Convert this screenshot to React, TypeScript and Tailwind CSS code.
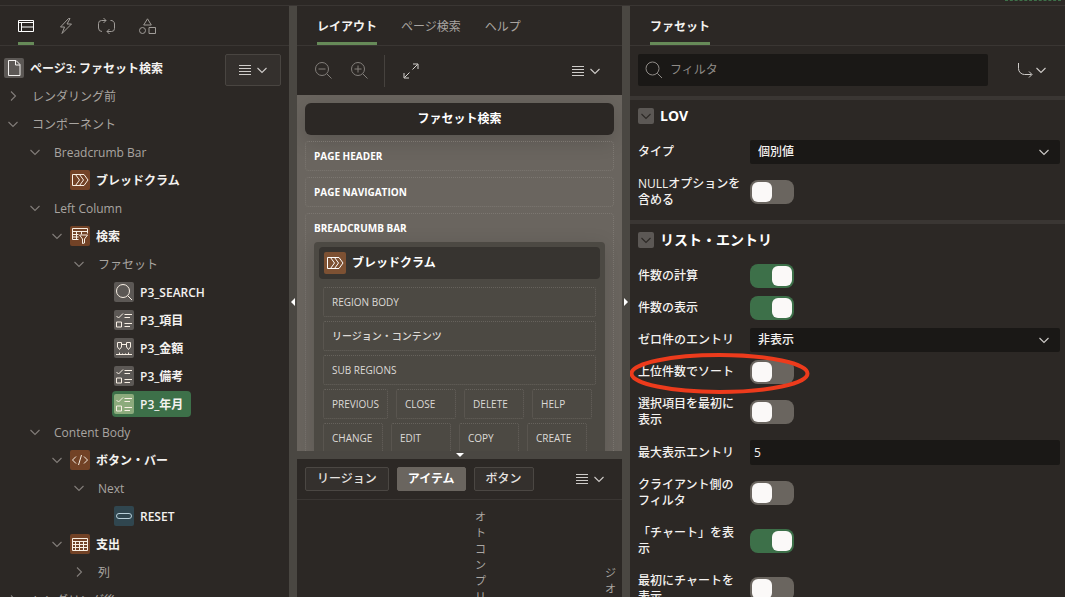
import { useState } from 'react';
import type { ReactNode } from 'react';

type TileTone = 'brown' | 'gray' | 'teal';

type TreeNode = {
  label: string;
  icon?: ReactNode;
  tone?: TileTone;
  open?: boolean;
  selected?: boolean;
  children?: TreeNode[];
};

const tileTones: Record<TileTone, string> = {
  brown: 'bg-[#724226]',
  gray: 'bg-[#5c5855]',
  teal: 'bg-[#30464f]',
};

function Glyph({ children, className = 'size-5' }: { children: ReactNode; className?: string }) {
  return (
    <svg className={className} viewBox="0 0 20 20" fill="none" stroke="currentColor" aria-hidden="true">
      {children}
    </svg>
  );
}

function Chevron({ className = '', right = false }: { className?: string; right?: boolean }) {
  return (
    <svg className={`size-3 ${className}`} viewBox="0 0 12 12" fill="none" stroke="currentColor" strokeWidth="1.1" aria-hidden="true">
      <path d={right ? 'M4 1.5 8.5 6 4 10.5' : 'M1.5 4 6 8.5 10.5 4'} />
    </svg>
  );
}

const breadcrumbIcon = (
  <Glyph>
    <path d="M2.5 4.5H14L18 10l-4 5.5H2.5zM5.5 4.5 9.5 10l-4 5.5M9.5 4.5l4 5.5-4 5.5" />
  </Glyph>
);

const facetedIcon = (
  <Glyph>
    <path d="M8.5 13.5h-6v-11h15v5M2.5 5.5h15M2.5 8.5h6M2.5 11h6M6.5 5.5v8M11.5 5.5v3" />
    <path d="M9.5 9h8l-3 4v4l-2 .5V13z" />
  </Glyph>
);

const searchIcon = (
  <Glyph>
    <circle cx="9" cy="9" r="6.5" />
    <path d="m13.8 13.8 4.2 4.2" />
  </Glyph>
);

const checksIcon = (
  <Glyph>
    <path d="m2.5 6 2 2L9 3.5M10.5 4.5H18M10.5 7.5h5.5M10.5 13.5H18M10.5 16.5h5.5M2.5 12h5v5h-5z" />
  </Glyph>
);

const rangeIcon = (
  <Glyph>
    <path d="M3.5 4.5h4V9l-2 2.5-2-2.5zM12.5 4.5h4V9l-2 2.5-2-2.5zM7.5 6.5h5M2 16.5h16M5.5 16.5v-2M8.5 16.5v-1M11.5 16.5v-1M14.5 16.5v-2" />
  </Glyph>
);

const codeIcon = (
  <Glyph>
    <path d="M6 6.5 2.5 10 6 13.5M14 6.5l3.5 3.5-3.5 3.5M11.5 5l-3 10" />
  </Glyph>
);

const buttonIcon = (
  <Glyph>
    <rect x="2.5" y="7.5" width="15" height="5" rx="2.5" />
  </Glyph>
);

const tableIcon = (
  <Glyph>
    <path d="M2.5 4.5h15v12h-15zM2.5 7.5h15M2.5 10.5h15M2.5 13.5h15M5.5 7.5v9M9.5 7.5v9M13.5 7.5v9" />
  </Glyph>
);

const tree: TreeNode[] = [
  { label: 'レンダリング前', open: false, children: [] },
  {
    label: 'コンポーネント',
    open: true,
    children: [
      {
        label: 'Breadcrumb Bar',
        open: true,
        children: [{ label: 'ブレッドクラム', icon: breadcrumbIcon, tone: 'brown' }],
      },
      {
        label: 'Left Column',
        open: true,
        children: [
          {
            label: '検索',
            icon: facetedIcon,
            tone: 'brown',
            open: true,
            children: [
              {
                label: 'ファセット',
                open: true,
                children: [
                  { label: 'P3_SEARCH', icon: searchIcon, tone: 'gray' },
                  { label: 'P3_項目', icon: checksIcon, tone: 'gray' },
                  { label: 'P3_金額', icon: rangeIcon, tone: 'gray' },
                  { label: 'P3_備考', icon: checksIcon, tone: 'gray' },
                  { label: 'P3_年月', icon: checksIcon, tone: 'gray', selected: true },
                ],
              },
            ],
          },
        ],
      },
      {
        label: 'Content Body',
        open: true,
        children: [
          {
            label: 'ボタン・バー',
            icon: codeIcon,
            tone: 'brown',
            open: true,
            children: [
              {
                label: 'Next',
                open: true,
                children: [{ label: 'RESET', icon: buttonIcon, tone: 'teal' }],
              },
            ],
          },
          {
            label: '支出',
            icon: tableIcon,
            tone: 'brown',
            open: true,
            children: [{ label: '列', open: false, children: [] }],
          },
        ],
      },
    ],
  },
  { label: 'レンダリング後', open: false, children: [] },
];

function TreeItem({ node }: { node: TreeNode }) {
  const [open, setOpen] = useState(!!node.open);

  return (
    <li>
      <div className="flex h-7 items-center">
        {node.children ? (
          <button
            className="flex w-6 shrink-0 justify-center pl-0.5 text-[#827e7a]"
            onClick={() => setOpen(!open)}
            aria-label={node.label}
            aria-expanded={open}
          >
            <Chevron right={!open} />
          </button>
        ) : (
          <span className="w-6 shrink-0" />
        )}
        <button
          className={`flex items-center gap-1.5 whitespace-nowrap rounded p-0.5 pr-2 leading-5 ${
            node.selected ? 'bg-[#3d7049]' : ''
          } ${node.icon ? 'font-semibold text-[#f4f2f0]' : 'pl-2 text-[#a9a5a1]'}`}
        >
          {node.icon && (
            <span
              className={`rounded-xs ${node.selected ? 'bg-[#8cab7c]' : tileTones[node.tone ?? 'gray']} ${
                node.tone === 'teal' ? 'text-[#b9d0da]' : 'text-[#f8efe4]'
              }`}
            >
              {node.icon}
            </span>
          )}
          <span className="pt-0.5">{node.label}</span>
        </button>
      </div>
      {open && node.children && node.children.length > 0 && (
        <ul className="pl-[22px]">
          {node.children.map((child) => (
            <TreeItem key={child.label} node={child} />
          ))}
        </ul>
      )}
    </li>
  );
}

function MenuButton({ boxed = false }: { boxed?: boolean }) {
  return (
    <button
      className={`flex h-8 w-14 shrink-0 items-center justify-center gap-1 rounded-xs text-[#cfccc9] ${
        boxed ? 'border border-[#494541] bg-[#34302d]' : ''
      }`}
      aria-label="メニュー"
    >
      <svg className="h-3 w-3.5" viewBox="0 0 14 12" stroke="currentColor" aria-hidden="true">
        <path d="M1 1.5h12M1 4.5h12M1 7.5h12M1 10.5h12" />
      </svg>
      <Chevron />
    </button>
  );
}

function VerticalSplitter({ right = false }: { right?: boolean }) {
  return (
    <div className="flex items-center justify-center bg-[#4a4742]">
      <svg className="h-2 w-1" viewBox="0 0 4 8" fill="#fff" aria-hidden="true">
        <path d={right ? 'M0 0l4 4-4 4z' : 'M4 0 0 4l4 4z'} />
      </svg>
    </div>
  );
}

function TabText({ label, active = false }: { label: string; active?: boolean }) {
  return (
    <button
      role="tab"
      aria-selected={active}
      className={`h-full border-b-3 pt-1.5 ${
        active ? 'border-[#668a58] font-semibold text-[#f4f2f0]' : 'border-transparent text-[#a9a5a1]'
      }`}
    >
      {label}
    </button>
  );
}

function TreePanel() {
  return (
    <aside className="flex min-w-0 flex-col overflow-hidden">
      <div role="tablist" className="flex h-10 shrink-0 gap-6 border-b border-[#3a3633] px-[18px] text-[#a09c98]">
        <button role="tab" aria-selected="true" aria-label="レンダリング" className="border-b-3 border-[#668a58] pt-1 text-white">
          <svg className="size-4" viewBox="0 0 16 16" fill="none" stroke="currentColor">
            <path d="M.5 2.500h15v11H.5zM.5 4.500h15M3.500 4.500v9M3.500 9h12" />
          </svg>
        </button>
        <button role="tab" aria-label="動的アクション" className="border-b-3 border-transparent pt-1">
          <svg className="size-4" viewBox="0 0 16 16" fill="none" stroke="currentColor" strokeLinejoin="round">
            <path d="M10.500.5 2.500 9h4l-2.500 6.500 9.500-9.500H9l3-5.500z" />
          </svg>
        </button>
        <button role="tab" aria-label="プロセス" className="border-b-3 border-transparent pt-1">
          <svg className="h-4 w-[17px]" viewBox="0 0 17 16" fill="none" stroke="currentColor">
            <path d="M4 13.500a3.500 3.500 0 0 1-3.500-3.500V5.500A3 3 0 0 1 3.500 2.500h4.500M5.500 0l2.500 2.500L5.500 5M12.500 2.500A3.500 3.500 0 0 1 16.500 6v4.500a3 3 0 0 1-3 3H9M11.500 11 9 13.500l2.500 2.500" />
          </svg>
        </button>
        <button role="tab" aria-label="共有コンポーネント" className="border-b-3 border-transparent pt-1">
          <svg className="h-4 w-[17px]" viewBox="0 0 17 16" fill="none" stroke="currentColor">
            <path d="M8.500.8 12.300 7H4.700zM10 9.500h6.500v6H10z" />
            <circle cx="3.500" cy="12.500" r="3" />
          </svg>
        </button>
      </div>
      <div className="flex items-start pt-2">
        <nav className="min-w-0 flex-1">
          <button className="flex h-7 items-center gap-1.5 whitespace-nowrap pl-1 font-semibold leading-5 text-[#f4f2f0]">
            <span className="rounded-xs bg-[#5c5855]">
              <Glyph>
                <path d="M4.500 2.500h7.500l4 4v11H4.500zM11.500 2.500V7H16" />
              </Glyph>
            </span>
            <span className="pt-0.5">ページ3: ファセット検索</span>
          </button>
          <ul>
            {tree.map((node) => (
              <TreeItem key={node.label} node={node} />
            ))}
          </ul>
        </nav>
        <div className="pr-2">
          <MenuButton boxed />
        </div>
      </div>
    </aside>
  );
}

function Slot({ label }: { label: string }) {
  return (
    <div className="h-[30px] min-w-[60px] rounded-xs border border-dotted border-[#66625c] px-2 text-[10px] font-medium leading-7 text-[#dddad7]">
      {label}
    </div>
  );
}

const buttonSlots = ['PREVIOUS', 'CLOSE', 'DELETE', 'HELP', 'CHANGE', 'EDIT', 'COPY', 'CREATE'];

function LayoutPanel() {
  return (
    <main className="flex min-w-0 flex-col overflow-hidden">
      <div role="tablist" className="flex h-10 shrink-0 gap-6 border-b border-[#3a3633] px-5">
        <TabText label="レイアウト" active />
        <TabText label="ページ検索" />
        <TabText label="ヘルプ" />
      </div>
      <div className="flex h-[49px] shrink-0 items-center pl-4 pr-2">
        <button className="flex w-5 justify-center text-[#837f7b]" aria-label="縮小">
          <Glyph>
            <circle cx="9" cy="8" r="6.500" />
            <path d="m13.800 12.800 4.700 4.700M5.500 8h7" />
          </Glyph>
        </button>
        <button className="ml-4 flex w-5 justify-center text-[#837f7b]" aria-label="拡大">
          <Glyph>
            <circle cx="9" cy="8" r="6.500" />
            <path d="m13.800 12.800 4.700 4.700M5.500 8h7M9 4.500v7" />
          </Glyph>
        </button>
        <span className="ml-[15px] h-8 w-px bg-[#46423e]" />
        <button className="ml-4 flex text-[#d5d2cf]" aria-label="展開">
          <Glyph>
            <path d="M11.500 8.500 16.500 3.500M12 3h5v5M8.500 11.500l-5 5M3 12v5h5" />
          </Glyph>
        </button>
        <div className="ml-auto">
          <MenuButton />
        </div>
      </div>

      <div className="flex h-[356px] min-h-0 flex-col gap-1.5 overflow-hidden bg-[#6a655f] p-2 pb-0">
        <h1 className="shrink-0 rounded-md bg-[#2c2825] text-center font-bold leading-8 text-white shadow-[0_6px_20px_rgba(0,0,0,0.16)]">
          ファセット検索
        </h1>
        <div className="h-[30px] shrink-0 rounded border border-dotted border-[#7c7771] px-2 text-[10px] font-bold leading-7 text-white">PAGE HEADER</div>
        <div className="h-[30px] shrink-0 rounded border border-dotted border-[#7c7771] px-2 text-[10px] font-bold leading-7 text-white">PAGE NAVIGATION</div>
        <div className="shrink-0 rounded border border-dotted border-[#7c7771] px-2 text-[10px] font-bold leading-7 text-white">
          BREADCRUMB BAR
          <div className="rounded-t bg-[#4c4943] p-[5px] font-normal shadow-[0_4px_20px_rgba(0,0,0,0.14)]">
            <h2 className="flex h-8 items-center gap-1.5 rounded bg-[#373430] px-[5px] text-xs font-bold text-white">
              <span className="rounded-xs bg-[#7d5133] p-px">{breadcrumbIcon}</span>
              ブレッドクラム
            </h2>
            <div className="flex flex-col gap-1 px-1 pt-2 font-normal">
              <Slot label="REGION BODY" />
              <Slot label="リージョン・コンテンツ" />
              <Slot label="SUB REGIONS" />
              <div className="flex flex-wrap gap-x-2 gap-y-1">
                {buttonSlots.map((name) => (
                  <Slot key={name} label={name} />
                ))}
              </div>
            </div>
          </div>
        </div>
      </div>

      <div className="flex h-2 shrink-0 items-center justify-center bg-[#4a4742]">
        <svg className="h-1 w-2" viewBox="0 0 8 4" fill="#fff" aria-hidden="true">
          <path d="M0 0h8L4 4z" />
        </svg>
      </div>

      <div className="flex h-[41px] shrink-0 items-center gap-2 border-b border-[#3a3633] pl-2 pr-1">
        <button className="h-6 rounded-xs border border-[#4b4743] bg-[#34302d] px-[11px] font-medium text-[#e6e3e0]">リージョン</button>
        <button className="h-6 rounded-xs border border-[#6a655f] bg-[#6a655f] px-[10px] font-bold text-white">アイテム</button>
        <button className="h-6 rounded-xs border border-[#4b4743] bg-[#34302d] px-[11px] font-medium text-[#e6e3e0]">ボタン</button>
        <div className="ml-auto">
          <MenuButton />
        </div>
      </div>
      <div className="flex min-h-0 flex-1 justify-end gap-[119px] overflow-hidden pr-1.5 pt-[9px] text-[11px] leading-4 text-[#aaa6a2]">
        <span className="w-[11px] break-all">オトコンプリ</span>
        <span className="w-[11px] break-all pt-14">ジオ</span>
      </div>
    </main>
  );
}

function PropertyRow({ id, label, children }: { id: string; label: string; children: ReactNode }) {
  return (
    <div className="relative flex items-center gap-2 pl-2 pr-[5px]">
      <label htmlFor={id} className="w-[104px] shrink-0 py-2 font-medium leading-4 text-[#f4f2f0]">
        {label}
      </label>
      {children}
    </div>
  );
}

function SwitchRow({ id, label, on = false, children }: { id: string; label: string; on?: boolean; children?: ReactNode }) {
  return (
    <PropertyRow id={id} label={label}>
      <input
        id={id}
        type="checkbox"
        role="switch"
        defaultChecked={on}
        className="h-6 w-11 appearance-none rounded-lg bg-[#6a655f] p-0.5 before:block before:size-5 before:rounded-md before:bg-[#fbf9f8] checked:bg-[#3d7049] checked:before:translate-x-5"
      />
      {children}
    </PropertyRow>
  );
}

function SelectRow({ id, label, value }: { id: string; label: string; value: string }) {
  return (
    <PropertyRow id={id} label={label}>
      <div className="relative flex-1">
        <select id={id} className="block h-6 w-full appearance-none rounded-xs bg-[#1a1816] px-2 font-medium text-[#f4f2f0]">
          <option>{value}</option>
        </select>
        <Chevron className="pointer-events-none absolute right-2.5 top-1.5 text-[#cfccc9]" />
      </div>
    </PropertyRow>
  );
}

function PropertyGroup({ title, children }: { title: string; children: ReactNode }) {
  const [open, setOpen] = useState(true);

  return (
    <section className="border-t-4 border-[#3a3633] pb-1">
      <h2 className="flex h-8 items-center gap-1.5 px-2 text-sm font-bold text-white">
        <button
          className="flex size-4 items-center justify-center rounded-xs bg-[#5c5855] text-[#2c2825]"
          onClick={() => setOpen(!open)}
          aria-label={title}
          aria-expanded={open}
        >
          <Chevron />
        </button>
        {title}
      </h2>
      {open && <div className="pt-1">{children}</div>}
    </section>
  );
}

function PropertyPanel() {
  return (
    <aside className="flex min-w-0 flex-col overflow-hidden">
      <div role="tablist" className="flex h-10 shrink-0 border-b border-[#3a3633] px-5">
        <TabText label="ファセット" active />
      </div>
      <div className="flex h-[50px] shrink-0 items-start gap-2 pl-2 pr-1.5 pt-2">
        <div className="flex h-8 flex-1 items-center gap-1.5 rounded-xs bg-[#1a1816] px-1.5 text-[#8f8b87]">
          <Glyph>
            <circle cx="8.500" cy="8.500" r="6.500" />
            <path d="m13.300 13.300 4.700 4.700" />
          </Glyph>
          <input
            type="search"
            aria-label="フィルタ"
            placeholder="フィルタ"
            className="min-w-0 flex-1 bg-transparent text-white outline-none placeholder:text-[#8f8b87]"
          />
        </div>
        <button className="flex h-8 w-[63px] items-center justify-end gap-0.5 pr-3 text-[#cfccc9]" aria-label="グループに移動">
          <svg className="size-4" viewBox="0 0 16 16" fill="none" stroke="currentColor" aria-hidden="true">
            <path d="M1.500 1v5.500a6 6 0 0 0 6 6h7M12 9.500l3 3-3 3" />
          </svg>
          <Chevron />
        </button>
      </div>
      <PropertyGroup title="LOV">
        <SelectRow id="lov-type" label="タイプ" value="個別値" />
        <SwitchRow id="lov-null" label="NULLオプションを含める" />
      </PropertyGroup>
      <PropertyGroup title="リスト・エントリ">
        <SwitchRow id="compute-counts" label="件数の計算" on />
        <SwitchRow id="show-counts" label="件数の表示" on />
        <SelectRow id="zero-count" label="ゼロ件のエントリ" value="非表示" />
        <SwitchRow id="sort-top" label="上位件数でソート">
          {/* highlight ring drawn over the row */}
          <svg className="pointer-events-none absolute -top-1 left-0 h-[42px] w-[180px]" viewBox="0 0 180 42" fill="none" aria-hidden="true">
            <ellipse cx="89.500" cy="21.500" rx="88" ry="18.500" stroke="#ed3b1c" strokeWidth="4" />
          </svg>
        </SwitchRow>
        <SwitchRow id="selected-first" label="選択項目を最初に表示" />
        <PropertyRow id="max-entries" label="最大表示エントリ">
          <input
            id="max-entries"
            type="text"
            defaultValue="5"
            className="my-1 h-[25px] min-w-0 flex-1 rounded-xs bg-[#1a1816] px-1 font-medium text-[#f4f2f0]"
          />
        </PropertyRow>
        <SwitchRow id="client-filter" label="クライアント側のフィルタ" />
        <SwitchRow id="show-chart" label="「チャート」を表示" on />
        <SwitchRow id="initial-chart" label="最初にチャートを表示" />
      </PropertyGroup>
    </aside>
  );
}

export default function App() {
  return (
    <div className="flex h-screen flex-col overflow-hidden bg-[#2c2825] font-['Open_Sans','Noto_Sans_CJK_JP',sans-serif] text-xs">
      <div className="flex h-1.5 shrink-0 justify-end border-b border-[#3a3633] pr-1">
        <span className="h-px w-14 border-t border-dashed border-[#3d7049]" />
      </div>
      <div className="grid min-h-0 flex-1 grid-cols-[minmax(0,289fr)_8px_minmax(0,325fr)_8px_minmax(0,435fr)]">
        <TreePanel />
        <VerticalSplitter />
        <LayoutPanel />
        <VerticalSplitter right />
        <PropertyPanel />
      </div>
    </div>
  );
}
